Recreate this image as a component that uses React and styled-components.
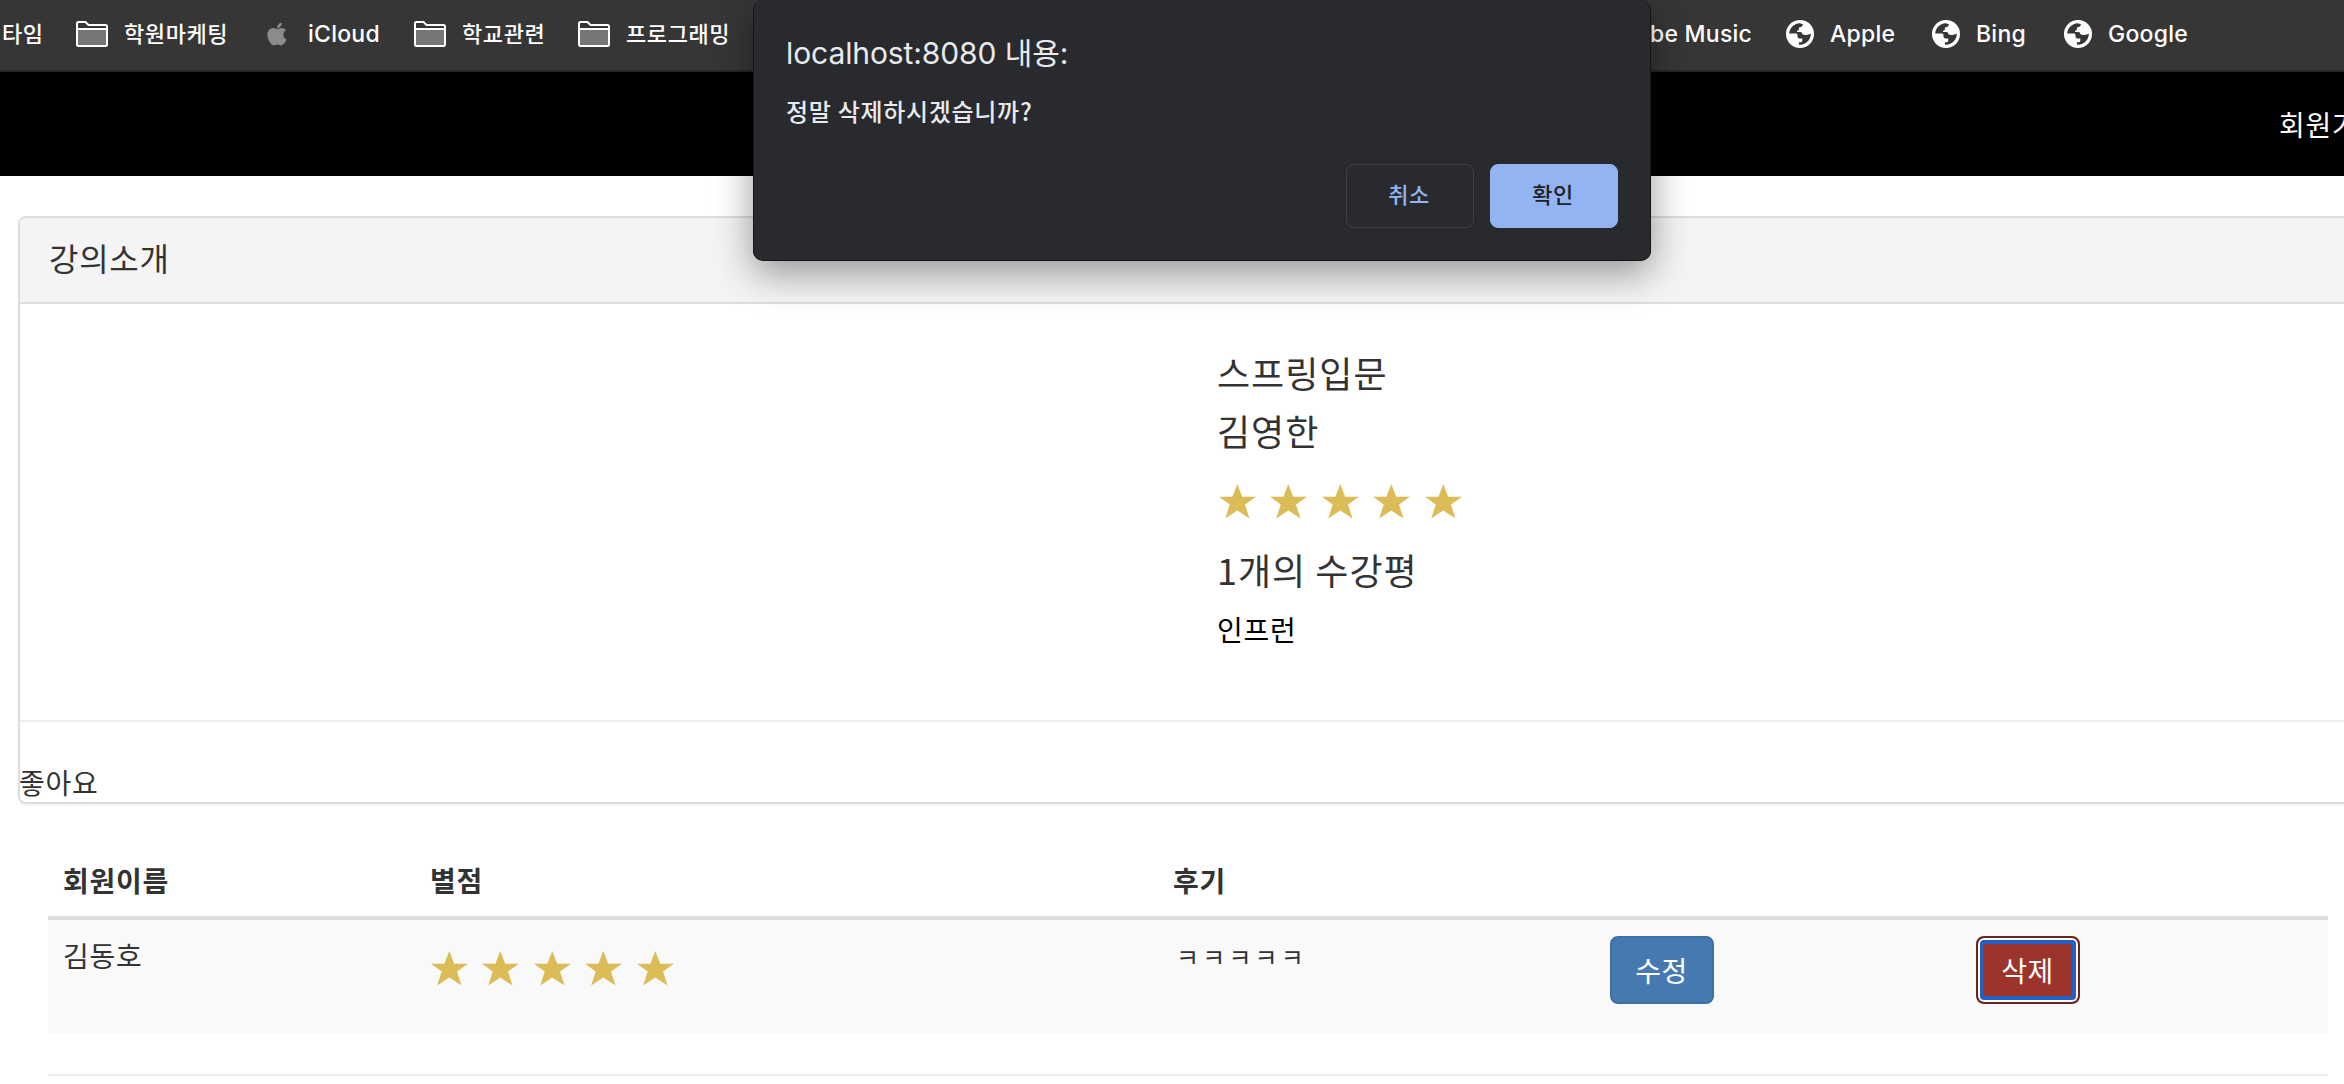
import React from "react";
import styled, { createGlobalStyle, css } from "styled-components";
import { FaApple } from "react-icons/fa";

const GlobalStyle = createGlobalStyle`
  * {
    box-sizing: border-box;
  }

  body {
    margin: 0;
    width: 2344px;
    height: 1084px;
    overflow: hidden;
    background-color: white;
    color: #333;
    font-family: "Noto Sans CJK KR", sans-serif;
    font-size: 28px;
    letter-spacing: 0.7px;
  }
`;

const FolderIcon = () => (
  <svg width="32" height="26" viewBox="0 0 32 26">
    <path
      d="M1 23.5V2.5Q1 1 2.5 1H9.5L12.5 4H29.5Q31 4 31 5.5V23.5Q31 25 29.5 25H2.5Q1 25 1 23.5Z"
      fill="#363636"
      stroke="white"
      strokeWidth="2"
    />
    <path d="M2 9H30V24H2Z" fill="#767676" />
    <path d="M2 8H30" stroke="white" strokeWidth="2" />
  </svg>
);

const GlobeIcon = () => (
  <svg width="28" height="28" viewBox="4 4 28 28">
    <circle cx="18" cy="18" r="14" fill="white" />
    <path
      d="M7.2 17.6C7.4 12 12 7.4 17.6 7.2L21 8.2C20.6 10.8 18.6 11.2 16.9 11.4V13.2C16.9 14 16.2 14.6 15 14.7V16H18.4C19.6 16 20.2 16.8 20.2 18C22 19.6 25.6 19.4 28.8 17.6C29 23.6 24.2 28.8 18 28.8L16.9 28.6V26.2H18.6C19.6 26.2 20.3 25.4 20.3 24.4V22.4H17.4C16.3 22.4 15.5 21.6 15.5 20.5V19.2C15.5 18.2 14.8 17.6 13.8 17.6Z"
      fill="#363636"
    />
  </svg>
);

const Stars = () => (
  <StarRow>
    {[1, 2, 3, 4, 5].map((n) => (
      <svg key={n} width="37" height="35" viewBox="0 0 37 35">
        <path
          d="M18.3 0L23.2 12.7H37L26 20.6L30.5 34.6L18.3 26.4L6.2 34.6L10.7 20.6L0 12.7H13.4Z"
          fill="#dcbc56"
        />
      </svg>
    ))}
  </StarRow>
);

const reviews = [{ name: "김동호", text: "ㅋㅋㅋㅋㅋ" }];

const App = () => {
  return (
    <>
      <GlobalStyle />
      <BookmarkBar>
        <Bookmark $left={2} $width={76}>
          <Korean>타임</Korean>
        </Bookmark>
        <Bookmark $width={190}>
          <FolderIcon />
          <Korean>학원마케팅</Korean>
        </Bookmark>
        <Bookmark $width={148}>
          <AppleIcon />
          <Latin>iCloud</Latin>
        </Bookmark>
        <Bookmark $width={164}>
          <FolderIcon />
          <Korean>학교관련</Korean>
        </Bookmark>
        <Bookmark $width={1000}>
          <FolderIcon />
          <Korean>프로그래밍</Korean>
        </Bookmark>
        <Bookmark $left={3} $width={208}>
          <Latin>YouTube Music</Latin>
        </Bookmark>
        <Bookmark $width={146}>
          <GlobeIcon />
          <Latin>Apple</Latin>
        </Bookmark>
        <Bookmark $width={132}>
          <GlobeIcon />
          <Latin>Bing</Latin>
        </Bookmark>
        <Bookmark $width={160}>
          <GlobeIcon />
          <Latin>Google</Latin>
        </Bookmark>
      </BookmarkBar>

      <NavBar>
        <NavLink>회원가입</NavLink>
      </NavBar>

      <Panel>
        <PanelHeading>강의소개</PanelHeading>
        <Lecture>
          <Line>스프링입문</Line>
          <Line>김영한</Line>
          <Rating>
            <Stars />
          </Rating>
          <Line>1개의 수강평</Line>
          <SiteLink>인프런</SiteLink>
        </Lecture>
        <Like>좋아요</Like>
      </Panel>

      <Table>
        <HeadRow>
          <HeadCell>회원이름</HeadCell>
          <HeadCell>별점</HeadCell>
          <HeadCell>후기</HeadCell>
        </HeadRow>
        {reviews.map((review) => (
          <Row key={review.name}>
            <Cell>{review.name}</Cell>
            <StarCell>
              <Stars />
            </StarCell>
            <CommentCell>{review.text}</CommentCell>
            <ButtonCell>
              <Button>수정</Button>
            </ButtonCell>
            <ButtonCell>
              <Button $danger>삭제</Button>
            </ButtonCell>
          </Row>
        ))}
      </Table>
      <Divider />

      <Dialog>
        <DialogTitle>localhost:8080 내용:</DialogTitle>
        <DialogMessage>정말 삭제하시겠습니까?</DialogMessage>
        <DialogButtons>
          <DialogButton>취소</DialogButton>
          <DialogButton $primary>확인</DialogButton>
        </DialogButtons>
      </Dialog>
    </>
  );
};

export default App;

const BookmarkBar = styled.div`
  display: flex;
  align-items: center;
  height: 72px;
  padding-bottom: 2px;
  overflow: hidden;
  background-color: #363636;
  border-bottom: 2px solid #282828;
`;

const Bookmark = styled.div`
  display: flex;
  flex: none;
  align-items: center;
  gap: 16px;
  width: ${({ $width }) => $width}px;
  padding-left: ${({ $left }) => $left || 0}px;
  color: white;
  font-size: 22px;
  font-weight: 500;
  letter-spacing: 0.6px;
  white-space: nowrap;

  svg {
    flex: none;
  }
`;

const Korean = styled.span`
  padding-bottom: 4px;
`;

const Latin = styled.span`
  font-family: Inter, sans-serif;
  font-size: 23px;
  letter-spacing: 0.25px;
`;

const AppleIcon = styled(FaApple)`
  width: 22px;
  height: 26px;
  margin-right: 4px;
  color: #8b8b8b;
`;

const NavBar = styled.div`
  display: flex;
  justify-content: flex-end;
  align-items: center;
  height: 104px;
  overflow: hidden;
  background-color: black;
`;

const NavLink = styled.a`
  flex: none;
  width: 65px;
  color: white;
  white-space: nowrap;
`;

const Panel = styled.div`
  width: 2400px;
  height: 588px;
  margin: 40px 0 0 18px;
  border: 2px solid #ddd;
  border-radius: 8px;
  box-shadow: 0 2px 2px rgba(0, 0, 0, 0.05);
`;

const PanelHeading = styled.div`
  height: 86px;
  padding-left: 29px;
  border-bottom: 2px solid #ddd;
  border-radius: 6px 6px 0 0;
  background-color: #f4f4f4;
  font-size: 32px;
  line-height: 78px;
`;

const Lecture = styled.div`
  height: 418px;
  padding: 39px 0 0 1197px;
  border-bottom: 2px solid #eee;
`;

const Line = styled.div`
  font-size: 36px;
  letter-spacing: 1px;
  line-height: 58px;
`;

const Rating = styled.div`
  height: 81px;
  padding: 25px 0 0 2px;
`;

const StarRow = styled.div`
  display: flex;
  gap: 14.4px;
`;

const SiteLink = styled.a`
  display: block;
  color: black;
  line-height: 63px;
`;

const Like = styled.div`
  padding-top: 40px;
  margin-left: -1px;
  line-height: 40px;
`;

const Table = styled.div`
  width: 2280px;
  margin: 36px 0 0 48px;
`;

const grid = css`
  display: grid;
  grid-template-columns: 367px 743px 437px 366px 1fr;
  padding-left: 15px;
`;

const HeadRow = styled.div`
  ${grid}
  height: 80px;
  border-bottom: 4px solid #ddd;
`;

const HeadCell = styled.div`
  font-weight: bold;
  line-height: 80px;
`;

const Row = styled.div`
  ${grid}
  height: 114px;
  background-color: #f9f9f9;
`;

const Cell = styled.div`
  padding-top: 15px;
  line-height: 40px;
`;

const CommentCell = styled(Cell)`
  padding: 16px 0 0 3px;
  font-size: 25px;
  letter-spacing: 3.2px;
`;

const StarCell = styled.div`
  padding: 31px 0 0 1px;
`;

const ButtonCell = styled.div`
  padding-top: 16px;
`;

const Button = styled.button`
  display: block;
  width: 104px;
  height: 68px;
  padding: 0 1px 0 0;
  border: 2px solid #3e6fa5;
  border-radius: 8px;
  background-color: #4679b2;
  color: white;
  font-family: inherit;
  font-size: 28px;
  letter-spacing: 0.5px;
  line-height: 58px;

  ${({ $danger }) =>
    $danger &&
    css`
      border-color: #6f221e;
      background-color: #9d342c;
      box-shadow: inset 0 0 0 2px white, inset 0 0 0 6px #2360c5;
    `}
`;

const Divider = styled.div`
  width: 2280px;
  height: 2px;
  margin: 40px 0 0 48px;
  background-color: #eee;
`;

const Dialog = styled.div`
  position: absolute;
  top: 0;
  left: 753px;
  width: 898px;
  height: 261px;
  padding: 32px;
  border: 1px solid #151618;
  border-top: 0;
  border-radius: 10px;
  background-color: #292a2e;
  box-shadow: 0 12px 38px rgba(0, 0, 0, 0.4);
  color: #e8eaed;
`;

const DialogTitle = styled.div`
  font-family: Inter, "Noto Sans CJK KR", sans-serif;
  font-size: 30px;
  letter-spacing: -0.1px;
  line-height: 42px;
`;

const DialogMessage = styled.div`
  margin-top: 17px;
  font-size: 24px;
  font-weight: 500;
  line-height: 40px;
`;

const DialogButtons = styled.div`
  display: flex;
  justify-content: flex-end;
  gap: 16px;
  margin-top: 33px;
`;

const DialogButton = styled.button`
  width: 128px;
  height: 64px;
  padding: 0 2px 6px 0;
  border: 1px solid ${({ $primary }) => ($primary ? "#92b4f2" : "#404144")};
  border-radius: 8px;
  background-color: ${({ $primary }) => ($primary ? "#92b4f2" : "transparent")};
  color: ${({ $primary }) => ($primary ? "#202124" : "#92b4f2")};
  font-family: inherit;
  font-size: 22px;
  font-weight: 500;
  letter-spacing: 0.6px;
`;
